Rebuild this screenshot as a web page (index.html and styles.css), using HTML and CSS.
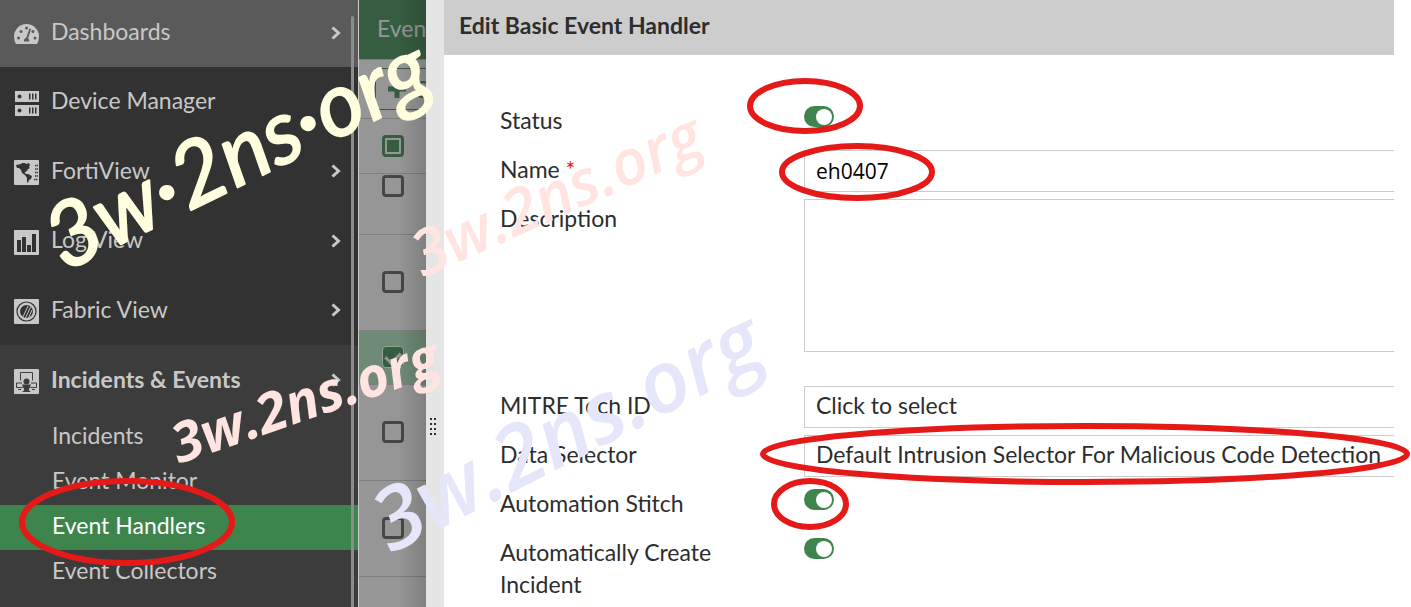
FILE: index.html
```
<!DOCTYPE html>
<html lang="en">
<head>
  <meta charset="UTF-8" />
  <title>Edit Basic Event Handler</title>
  <meta name="viewport" content="width=device-width, initial-scale=1.0"/>
  <link rel="stylesheet" href="styles.css">
</head>
<body>

<div class="app">
  <nav class="sidebar">
    <a href="#" class="menu-item first">
      <svg class="icon" viewBox="0 0 25 25"><path fill="#c8c8c8" d="M2 22Q0 19 0 14.500A12.500 12.500 0 0 1 25 14.500Q25 19 23 22Z"/><g fill="#5a5a5a"><circle cx="4.500" cy="16" r="1.500"/><circle cx="7" cy="9.500" r="1.500"/><circle cx="12.500" cy="6" r="1.500"/><circle cx="19" cy="9.500" r="1.500"/><circle cx="21" cy="16" r="1.500"/><path d="M15.500 6.500l1.600.5-3 9.500q2 1 1 3h-5q-1-2.500 2-3.500z"/></g></svg>
      <span>Dashboards</span>
      <svg class="chevron" viewBox="0 0 10 14"><path d="M1.500 1.500L7.500 7l-6 5.500"/></svg>
    </a>
    <div class="menu-group">
      <a href="#" class="menu-item">
        <svg class="icon" viewBox="0 0 25 25"><path fill="#c8c8c8" d="M1 0h24v11H1zM1 14h24v11H1z"/><g fill="#323232"><circle cx="5.500" cy="5.500" r="2"/><circle cx="5.500" cy="19.500" r="2"/><path d="M15 2.500h1.500v6H15zM18 2.500h1.500v6H18zM21 2.500h1.500v6H21zM15 16.500h1.500v6H15zM18 16.500h1.500v6H18zM21 16.500h1.500v6H21z"/></g></svg>
        <span>Device Manager</span>
      </a>
      <a href="#" class="menu-item">
        <svg class="icon" viewBox="0 0 25 25"><rect width="25" height="25" rx="1" fill="#c8c8c8"/><path fill="#323232" d="M2 5l5-1 1-1 3 0 1 1 3-1 1 2-1 2 1 1-2 1-1 2-2 1 0 1 1 1 2 0 4 2-1 3-2 1-1 3-1-1 0-4-2-3-3-2-1-3-2-2-2 0z"/><path d="M21 5.500h3M21 9h3M21 12.500h3M21 16h3M20 19.500h4" stroke="#323232" stroke-width="1.500" stroke-dasharray="1.500 .5"/></svg>
        <span>FortiView</span>
        <svg class="chevron" viewBox="0 0 10 14"><path d="M1.500 1.500L7.500 7l-6 5.500"/></svg>
      </a>
      <a href="#" class="menu-item">
        <svg class="icon" viewBox="0 0 25 25"><rect width="25" height="25" rx="1" fill="#c8c8c8"/><path fill="#323232" d="M3 10h4v12H3zM8 7h4v15H8zM13 15h4v7h-4zM18 4h4v18h-4z"/></svg>
        <span>Log View</span>
        <svg class="chevron" viewBox="0 0 10 14"><path d="M1.500 1.500L7.500 7l-6 5.500"/></svg>
      </a>
      <a href="#" class="menu-item">
        <svg class="icon" viewBox="0 0 25 25"><rect width="25" height="25" rx="1" fill="#c8c8c8"/><circle cx="12.500" cy="12.500" r="9.500" fill="none" stroke="#323232" stroke-width="1.200"/><circle cx="12.500" cy="12.500" r="6.500" fill="#323232"/><path d="M9 18l5-11M11.500 19l5-11M14.500 19l3.500-8" stroke="#c8c8c8" stroke-width="1"/></svg>
        <span>Fabric View</span>
        <svg class="chevron" viewBox="0 0 10 14"><path d="M1.500 1.500L7.500 7l-6 5.500"/></svg>
      </a>
    </div>
    <div class="submenu">
      <a href="#" class="menu-item open">
        <svg class="icon" viewBox="0 0 25 25"><rect width="25" height="25" rx="1" fill="#c8c8c8"/><path d="M6.500 11.500v-8h12v8M8 14H2.500v4.500h6M17 14h5.500v4.500h-6M4 20.500h3M18 20.500h3" fill="none" stroke="#3c3c3c"/><circle cx="12.500" cy="12.500" r="3" fill="#3c3c3c"/><path fill="#3c3c3c" d="M8 15.500l9 0-1 3-1 1 0 2 2 1.500H8l2-1.500 0-2-1-1z"/></svg>
        <span>Incidents &amp; Events</span>
        <svg class="chevron" viewBox="0 0 10 14"><path d="M1.500 1.500L7.500 7l-6 5.500"/></svg>
      </a>
      <a href="#" class="sub-item">Incidents</a>
      <a href="#" class="sub-item">Event Monitor</a>
      <a href="#" class="sub-item active">Event Handlers</a>
      <a href="#" class="sub-item">Event Collectors</a>
    </div>
    <div class="scrollbar"></div>
  </nav>

  <section class="list">
    <div class="list-header">Event</div>
    <div class="toolbar">
      <button class="create">
        <svg class="plus" viewBox="0 0 18 18"><path d="M9 0v18M0 9h18"/></svg>
        C
      </button>
    </div>
    <table class="rows">
      <tr class="head"><td><input type="checkbox" class="box partial" aria-label="Select all"></td></tr>
      <tr class="cut"><td><input type="checkbox" class="box" aria-label="Select row 1"></td></tr>
      <tr><td><input type="checkbox" class="box" aria-label="Select row 2"></td></tr>
      <tr class="selected"><td><input type="checkbox" class="box" aria-label="Select row 3" checked></td></tr>
      <tr><td><input type="checkbox" class="box" aria-label="Select row 4"></td></tr>
      <tr><td><input type="checkbox" class="box" aria-label="Select row 5"></td></tr>
    </table>
    <div class="shade"></div>
  </section>

  <div class="splitter">
    <svg class="grip" viewBox="0 0 6 17"><path d="M0 0h2v2H0zM4 0h2v2H4zM0 5h2v2H0zM4 5h2v2H4zM0 10h2v2H0zM4 10h2v2H4zM0 15h2v2H0zM4 15h2v2H4z"/></svg>
  </div>

  <main class="panel">
    <h1>Edit Basic Event Handler</h1>
    <form class="form">
      <label for="status">Status</label>
      <input type="checkbox" id="status" class="toggle" checked>

      <label for="name">Name <span class="required">*</span></label>
      <input type="text" id="name" class="field name" value="eh0407">

      <label for="description">Description</label>
      <textarea id="description" class="field description"></textarea>

      <label for="mitre">MITRE Tech ID</label>
      <select id="mitre" class="field"><option>Click to select</option></select>

      <label for="selector">Data Selector</label>
      <select id="selector" class="field"><option>Default Intrusion Selector For Malicious Code Detection</option></select>

      <label for="stitch">Automation Stitch</label>
      <input type="checkbox" id="stitch" class="toggle" checked>

      <label for="incident">Automatically Create Incident</label>
      <input type="checkbox" id="incident" class="toggle" checked>
    </form>
  </main>
</div>

<!-- marks and watermarks over the page -->
<svg class="overlay">
  <g class="rings">
    <ellipse cx="805" cy="106" rx="55" ry="25"/>
    <ellipse cx="857" cy="172" rx="75" ry="26"/>
    <ellipse cx="1085" cy="454" rx="322" ry="28"/>
    <ellipse cx="810" cy="504" rx="36" ry="23"/>
    <ellipse cx="127" cy="522" rx="105" ry="41"/>
  </g>
  <text class="mark cream" transform="translate(64 272) rotate(-26)">3w·2ns·org</text>
  <text class="mark rose" transform="translate(179 464) rotate(-19)">3w.2ns.org</text>
  <text class="mark pale" transform="translate(423 278) rotate(-24)">3w.2ns.org</text>
  <text class="mark lavender" transform="translate(391 554) rotate(-27)">3w.2ns.org</text>
</svg>

</body>
</html>
```
FILE: styles.css
```
* {
  box-sizing: border-box;
}

body {
  margin: 0;
  font-family: Lato, "Liberation Sans", sans-serif;
  font-size: 23px;
  color: #2d2d2d;
  background-color: #ffffff;
  overflow: hidden;
}

.app {
  display: flex;
  height: 100vh;
  overflow: hidden;
}

/* sidebar */
.sidebar {
  position: relative;
  flex: 0 0 359px;
  background-color: #323232;
  border-right: 1px solid #cccccc;
  overflow: hidden;
}

.menu-group {
  display: grid;
  grid-auto-rows: 1fr;
  height: 278px;
}

.menu-item {
  display: flex;
  align-items: center;
  height: 70px;
  padding: 0 17px 0 14px;
  color: #c8c8c8;
  text-decoration: none;
}

.menu-group .menu-item {
  height: auto;
}

.menu-item span {
  flex: 1;
  margin-left: 12px;
  padding-bottom: 3px;
}

.menu-item.first {
  height: 67px;
  padding-bottom: 2px;
  background-color: #5a5a5a;
}

.menu-item.open {
  font-weight: bold;
}

.icon {
  width: 25px;
  height: 25px;
  margin-top: 3px;
}

.chevron {
  width: 10px;
  height: 14px;
  fill: none;
  stroke: #c8c8c8;
  stroke-width: 3;
}

.submenu {
  height: 100%;
  background-color: #3c3c3c;
}

.sub-item {
  display: block;
  padding-left: 52px;
  line-height: 41px;
  padding-bottom: 4px;
  color: #c8c8c8;
  text-decoration: none;
}

.sub-item.active {
  color: #ffffff;
  background-color: #3d854d;
}

.scrollbar {
  position: absolute;
  top: 16px;
  right: 4px;
  bottom: 0;
  width: 3px;
  border-radius: 2px 2px 0 0;
  background-color: #8c8c8c;
}

/* event handler list */
.list {
  position: relative;
  flex: 0 0 67px;
  background-color: #969696;
  overflow: hidden;
  white-space: nowrap;
}

.list-header {
  height: 60px;
  padding-left: 18px;
  line-height: 57px;
  color: #969696;
  background-color: #365d3f;
  border-bottom: 1px solid #7d7d7d;
}

.toolbar {
  height: 59px;
  padding: 8px 0 0 16px;
  border-bottom: 1px solid #7d7d7d;
}

.create {
  display: flex;
  align-items: center;
  gap: 8px;
  width: 100%;
  height: 42px;
  padding: 0 0 0 12px;
  border: 1px solid #365d3f;
  border-right: none;
  background: none;
  color: #365d3f;
  font: inherit;
}

.plus {
  flex: none;
  width: 18px;
  height: 18px;
  stroke: #365d3f;
  stroke-width: 5;
}

.rows {
  width: 100%;
  border-collapse: collapse;
}

.rows td {
  height: 96px;
  padding: 0 0 0 23px;
  border-bottom: 1px solid #7d7d7d;
  vertical-align: middle;
}

.rows .head td {
  height: 54px;
}

.rows .cut td {
  height: 61px;
  padding-top: 1px;
  vertical-align: top;
}

.rows .selected td {
  height: 54px;
  background-color: #6f8a76;
}

.box {
  appearance: none;
  display: block;
  width: 22px;
  height: 22px;
  margin: 0;
  border: 3px solid #464646;
  border-radius: 4px;
}

.box.partial {
  border-color: #365d3f;
  background: #365d3f content-box;
  padding: 2px;
}

.box:checked {
  border: 1px solid #8fa394;
  background-color: #365d3f;
}

.box:checked::after {
  content: "";
  display: block;
  width: 7px;
  height: 12px;
  margin: 2px auto;
  border: solid #969696;
  border-width: 0 3px 3px 0;
  transform: rotate(45deg);
}

.shade {
  position: absolute;
  top: 0;
  right: 0;
  bottom: 0;
  width: 28px;
  background: linear-gradient(to right, rgba(0, 0, 0, 0), rgba(0, 0, 0, 0.15));
}

.splitter {
  flex: 0 0 18px;
  padding: 418px 0 0 4px;
  background-color: #e5e5e5;
}

.grip {
  display: block;
  width: 6px;
  height: 17px;
  fill: #2d2d2d;
}

/* edit panel */
.panel {
  flex: 1;
  min-width: 0;
  margin-right: 17px;
  overflow: hidden;
}

h1 {
  margin: 0;
  padding: 0 15px 4px;
  font-size: 23px;
  line-height: 51px;
  background-color: #cdcdcd;
}

.form {
  display: grid;
  grid-template-columns: 248px 1fr;
  column-gap: 56px;
  row-gap: 7px;
  padding: 46px 0 0 56px;
  align-items: start;
}

.form label {
  min-height: 42px;
  padding-top: 3px;
  line-height: 32px;
}

.required {
  color: #e61919;
}

.field {
  appearance: none;
  width: 100%;
  height: 42px;
  margin: 0;
  padding: 0 0 4px 11px;
  border: 1px solid #cccccc;
  border-right: none;
  border-radius: 0;
  background-color: #ffffff;
  color: #2d2d2d;
  font: inherit;
}

.field.name {
  padding-bottom: 0;
  font-family: "Open Sans", sans-serif;
  font-size: 21px;
  color: #000000;
}

.field.description {
  display: block;
  height: 153px;
  margin-bottom: 27px;
  resize: none;
}

.toggle {
  appearance: none;
  width: 30px;
  height: 21px;
  margin: 5px 0 0;
  padding: 3px 2px 0 12px;
  border-radius: 11px;
  background-color: #3d854d;
}

.toggle::after {
  content: "";
  display: block;
  width: 16px;
  height: 16px;
  border-radius: 50%;
  background-color: #ffffff;
}

/* overlay */
.overlay {
  position: absolute;
  top: 0;
  left: 0;
  width: 100%;
  height: 100%;
  pointer-events: none;
}

.rings {
  fill: none;
  stroke: #e61919;
  stroke-width: 6;
}

.mark {
  font-family: "Open Sans", sans-serif;
  font-style: italic;
  font-weight: 600;
}

.cream {
  font-family: Lato, sans-serif;
  font-weight: normal;
  font-size: 89px;
  fill: #ffffe0;
  stroke: #ffffe0;
  stroke-width: 2;
  stroke-linejoin: round;
}

.rose {
  font-weight: bold;
  font-size: 55px;
  fill: #ffe4e1;
}

.pale {
  font-size: 63px;
  fill: #ffe4e1;
}

.lavender {
  font-size: 86px;
  fill: #e6e6fa;
}
```
